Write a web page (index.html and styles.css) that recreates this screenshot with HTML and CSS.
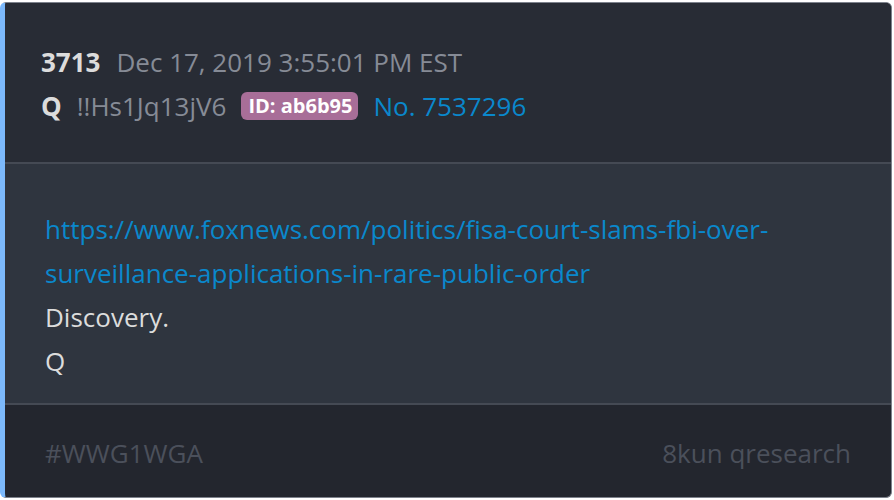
FILE: index.html
```html
<!DOCTYPE html>
<html lang="en">
<head>
    <meta charset="UTF-8">
    <meta name="viewport" content="width=device-width, initial-scale=1.0">
    <title>Post 3713</title>
    <link rel="stylesheet" href="styles.css">
</head>
<body>
    <!-- Cartão do post -->
    <div class="post">
        <div class="post-header">
            <div class="meta-line">
                <span class="post-num">3713</span>
                <span class="post-date">Dec 17, 2019 3:55:01 PM EST</span>
            </div>
            <div class="meta-line">
                <span class="author">Q</span>
                <span class="trip">!!Hs1Jq13jV6</span>
                <span class="id-badge">ID: ab6b95</span>
                <a class="post-link" href="#">No. 7537296</a>
            </div>
        </div>

        <div class="post-body">
            <a class="body-link" href="#">https://www.foxnews.com/politics/fisa-court-slams-fbi-over-surveillance-applications-in-rare-public-order</a>
            <p>Discovery.</p>
            <p>Q</p>
        </div>

        <div class="post-footer">
            <span>#WWG1WGA</span>
            <span>8kun qresearch</span>
        </div>
    </div>
</body>
</html>
```

FILE: styles.css
```css
body {
    margin: 0;
    background-color: #fff;
    font-family: 'Open Sans', Arial, sans-serif;
}

.post {
    margin: 2px 2px 2px 0;
    height: 496px;
    box-sizing: border-box;
    border: 1px solid #7d828c;
    border-left: 5px solid #7cb9fb;
    border-radius: 6px;
    overflow: hidden;
    display: flex;
    flex-direction: column;
    background-color: #23262e;
}

.post-header {
    background-color: #282c35;
    padding: 37px 36px 34px;
    border-bottom: 2px solid #454a54;
}

.meta-line {
    display: flex;
    align-items: center;
    height: 44px;
    font-size: 26px;
}

.post-num {
    font-weight: bold;
    color: #dcdcdc;
    margin-right: 16px;
}

.post-date {
    color: #868b96;
}

.author {
    font-weight: bold;
    color: #dcdcdc;
    margin-right: 15px;
}

.trip {
    color: #868b96;
    margin-right: 15px;
}

.id-badge {
    background-color: #a86e98;
    color: #fff;
    font-size: 20px;
    font-weight: bold;
    padding: 0 6px 0 7px;
    height: 28px;
    line-height: 28px;
    border-radius: 6px;
    margin-right: 15px;
}

.post-link {
    color: #0a88cc;
    text-decoration: none;
}

.post-body {
    background-color: #2f353f;
    padding: 43px 40px 20px;
    border-bottom: 2px solid #454a54;
    font-size: 26px;
    line-height: 44px;
    color: #dcdcdc;
}

.body-link {
    color: #0a88cc;
    text-decoration: none;
    display: block;
}

.post-body p {
    margin: 0;
}

.post-footer {
    flex: 1;
    display: flex;
    justify-content: space-between;
    align-items: center;
    padding: 4px 40px 0;
    font-size: 26px;
    color: #4b505b;
}
```
